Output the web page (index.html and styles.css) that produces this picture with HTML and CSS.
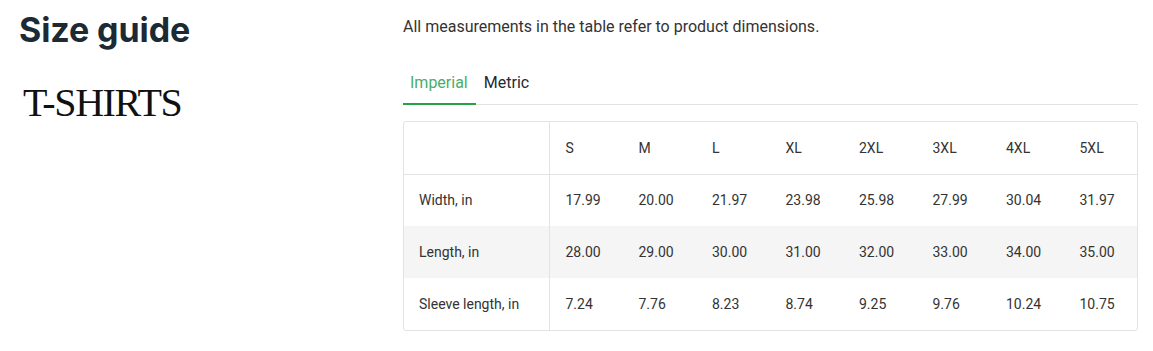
FILE: index.html
```html
<!DOCTYPE html>
<html>
<head>
<meta charset="utf-8">
<link rel="stylesheet" href="styles.css">
</head>
<body>
<div class="page">
  <aside class="side">
    <h1 class="title">Size guide</h1>
    <h2 class="product">T-SHIRTS</h2>
  </aside>
  <main class="main">
    <p class="note">All measurements in the table refer to product dimensions.</p>
    <div class="tabs">
      <span class="tab active">Imperial</span>
      <span class="tab">Metric</span>
    </div>
    <div class="table-wrap">
      <table class="sizes">
        <thead>
          <tr><th class="label"></th><th>S</th><th>M</th><th>L</th><th>XL</th><th>2XL</th><th>3XL</th><th>4XL</th><th>5XL</th></tr>
        </thead>
        <tbody>
          <tr><td class="label">Width, in</td><td>17.99</td><td>20.00</td><td>21.97</td><td>23.98</td><td>25.98</td><td>27.99</td><td>30.04</td><td>31.97</td></tr>
          <tr class="alt"><td class="label">Length, in</td><td>28.00</td><td>29.00</td><td>30.00</td><td>31.00</td><td>32.00</td><td>33.00</td><td>34.00</td><td>35.00</td></tr>
          <tr><td class="label">Sleeve length, in</td><td>7.24</td><td>7.76</td><td>8.23</td><td>8.74</td><td>9.25</td><td>9.76</td><td>10.24</td><td>10.75</td></tr>
        </tbody>
      </table>
    </div>
  </main>
</div>
</body>
</html>
```
FILE: styles.css
```css
* { box-sizing: border-box; }
html, body { margin: 0; padding: 0; background: #fff; }
body { font-family: Roboto, "Liberation Sans", sans-serif; color: #333; }
.page { display: flex; width: 1153px; height: 351px; }
.side { width: 403px; flex: none; padding: 8px 0 0 19px; }
.title {
  margin: 0;
  font-family: Inter, "Noto Sans", sans-serif;
  font-weight: 700;
  font-size: 34px;
  line-height: 44px;
  letter-spacing: -0.1px;
  color: #1b2a33;
}
.product {
  margin: 29px 0 0 4px;
  font-family: "Liberation Serif", serif;
  font-weight: 400;
  font-size: 40px;
  line-height: 44px;
  color: #111;
  letter-spacing: -1.4px;
}
.main { width: 735px; flex: none; padding-top: 17px; }
.note { margin: 0; font-size: 16px; line-height: 20px; color: #333; }
.tabs {
  display: flex;
  margin-top: 30px;
  border-bottom: 1px solid #e2e2e2;
}
.tab {
  font-size: 16px;
  line-height: 20px;
  padding: 6px 8px 11px 8px;
  color: #1f2a33;
}
.tab.active {
  color: #4aad6c;
  box-shadow: inset 0 -2px 0 #27a046;
  margin-bottom: -1px;
  padding: 6px 8px 12px 7px;
}
.table-wrap {
  margin-top: 16px;
  border: 1px solid #e3e3e3;
  border-radius: 3px;
  overflow: hidden;
}
.sizes {
  width: 100%;
  border-collapse: collapse;
  font-size: 14px;
  color: #333;
  table-layout: fixed;
}
.sizes th, .sizes td {
  text-align: left;
  font-weight: 400;
  height: 52px;
  padding: 0 0 0 16px;
  vertical-align: middle;
}
.sizes th.label, .sizes td.label { width: 145px; border-right: 1px solid #e3e3e3; padding-left: 15px; }
.sizes thead tr { border-bottom: 1px solid #e3e3e3; }
.sizes tr.alt td { background: #f5f5f5; }
```
